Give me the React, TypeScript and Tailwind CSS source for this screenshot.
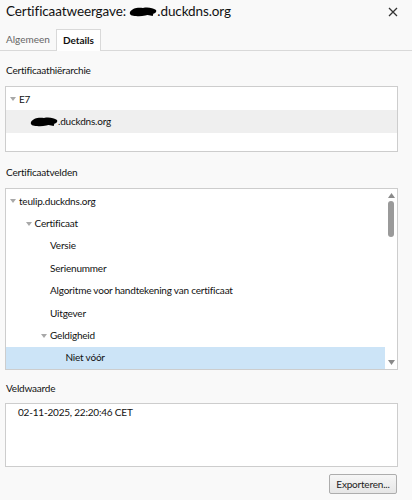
import React from 'react';

const font = { fontFamily: 'Lato, "Noto Sans", sans-serif' };

function Blob({ w = 28, h = 12 }: { w?: number; h?: number }) {
  return (
    <svg width={w} height={h} viewBox="0 0 28 12" className="inline-block shrink-0">
      <path
        d="M1 6 C3 2 9 1 14 2 C19 1 24 2 27 4 C28 6 26 8 22 8 C18 9 12 11 7 10 C3 10 0 9 1 6 Z"
        fill="#000"
      />
      <path d="M2 8 C8 6 16 7 24 9" stroke="#000" strokeWidth="2" fill="none" />
    </svg>
  );
}

function Caret() {
  return (
    <svg width="6" height="4" viewBox="0 0 6 4" className="shrink-0">
      <path d="M0 0 L6 0 L3 4 Z" fill="#a8a8a8" />
    </svg>
  );
}

function Row({
  level,
  open,
  selected,
  gray,
  children,
}: {
  level: number;
  open?: boolean;
  selected?: boolean;
  gray?: boolean;
  children: React.ReactNode;
}) {
  return (
    <div
      className={`flex items-center h-[22.4px] text-[10px] tracking-[-0.2px] text-[#111] ${
        selected ? 'bg-[#cce4f7]' : gray ? 'bg-[#efefef]' : ''
      }`}
      style={{ paddingLeft: 4 + level * 15.5 }}
    >
      <div className="w-[9px] flex items-center">{open && <Caret />}</div>
      {children}
    </div>
  );
}

export default function App() {
  return (
    <div className="w-[412px] h-[500px] bg-[#f9f9f9] overflow-hidden" style={font}>
      {/* Title */}
      <div className="flex items-center justify-between h-[22px] pl-[6px] pr-[14px] pt-[1px]">
        <div className="flex items-center text-[13.5px] tracking-[-0.1px] text-[#111]">
          <span>Certificaatweergave:&nbsp;</span>
          <Blob w={28} h={12} />
          <span>.duckdns.org</span>
        </div>
        <svg width="10" height="10" viewBox="0 0 10 10">
          <path d="M1 1 L9 9 M9 1 L1 9" stroke="#333" strokeWidth="1.3" />
        </svg>
      </div>

      {/* Tabs */}
      <div className="flex items-end h-[29px] border-b border-[#d9d9d9] pl-[6px]">
        <div className="h-[21px] flex items-center text-[10px] text-[#666] mr-[6px]">Algemeen</div>
        <div className="h-[22px] px-[6px] flex items-center text-[10px] font-bold text-[#111] bg-white border border-b-0 border-[#d9d9d9] -mb-px">
          Details
        </div>
      </div>

      <div className="px-[5px] pr-[14px]">
        <div className="h-[35px] flex items-center pl-px text-[10px] tracking-[-0.2px] text-[#111] pt-[3px]">Certificaathiërarchie</div>
        <div className="h-[66px] bg-white border border-[#cdcdcd] pt-px">
          <Row level={0} open>
            E7
          </Row>
          <Row level={0} gray>
            <span className="ml-[11px] flex items-center">
              <Blob w={28} h={12} />
              <span>.duckdns.org</span>
            </span>
          </Row>
        </div>

        <div className="h-[36px] flex items-center pl-px text-[10px] tracking-[-0.2px] text-[#111] pt-[5px]">Certificaatvelden</div>
        <div className="h-[182px] bg-white border border-[#cdcdcd] flex">
          <div className="flex-1 pt-[1px] overflow-hidden">
            <Row level={0} open>
              teulip.duckdns.org
            </Row>
            <Row level={1} open>
              Certificaat
            </Row>
            <Row level={2}>Versie</Row>
            <Row level={2}>Serienummer</Row>
            <Row level={2}>Algoritme voor handtekening van certificaat</Row>
            <Row level={2}>Uitgever</Row>
            <Row level={2} open>
              Geldigheid
            </Row>
            <Row level={3} selected>
              Niet vóór
            </Row>
          </div>
          <div className="w-[12px] flex flex-col items-center pt-[4px] pb-[4px]">
            <svg width="7" height="5" viewBox="0 0 7 5">
              <path d="M0 5 L7 5 L3.5 0 Z" fill="#8a8a8a" />
            </svg>
            <div className="w-[6px] h-[36px] mt-[3px] rounded-full bg-[#9a9a9a]" />
            <div className="flex-1" />
            <svg width="7" height="5" viewBox="0 0 7 5">
              <path d="M0 0 L7 0 L3.5 5 Z" fill="#8a8a8a" />
            </svg>
          </div>
        </div>

        <div className="h-[33px] flex items-center pl-px text-[10px] tracking-[-0.2px] text-[#111] pt-[3px]">Veldwaarde</div>
        <div className="h-[64px] bg-white border border-[#cdcdcd] pl-[12px] pt-[1px] text-[10px] tracking-[-0.2px] text-[#111]">
          02-11-2025, 22:20:46 CET
        </div>

        <div className="flex justify-end pt-[7px] pr-[1px]">
          <div className="h-[20px] w-[68px] flex items-center justify-center text-[10px] tracking-[-0.2px] text-[#222] bg-gradient-to-b from-[#f6f6f6] to-[#e6e6e6] border border-[#adadad] rounded-[2px]">
            Exporteren...
          </div>
        </div>
      </div>
    </div>
  );
}
